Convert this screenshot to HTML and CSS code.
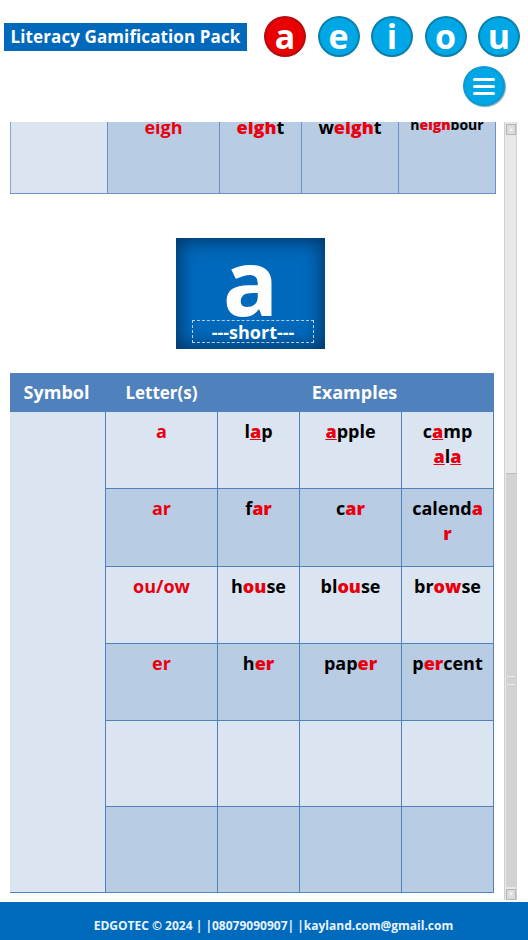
FILE: index.html
```html
<!DOCTYPE html>
<html lang="en">
<head>
  <meta charset="UTF-8">
  <title>Literacy Gamification Pack</title>
  <link rel="stylesheet" href="styles.css">
</head>
<body>

<header class="topbar">
  <div class="top-row">
    <h1 class="brand">Literacy Gamification Pack</h1>
    <nav class="vowels">
      <a class="vowel active">a</a>
      <a class="vowel">e</a>
      <a class="vowel">i</a>
      <a class="vowel">o</a>
      <a class="vowel">u</a>
    </nav>
  </div>
  <div class="menu-row">
    <button class="menu-btn" aria-label="Menu">
      <span></span><span></span><span></span>
    </button>
  </div>
</header>

<div class="viewport">
  <main class="scroll-area">
    <table class="chart chart-top">
      <colgroup>
        <col class="t1-a"><col class="t1-b"><col class="t1-c"><col class="t1-d"><col class="t1-e">
      </colgroup>
      <tr class="dark">
        <td class="symbol"></td>
        <td class="red">eigh</td>
        <td><b>eigh</b>t</td>
        <td>w<b>eigh</b>t</td>
        <td class="small">n<b>eigh</b>bour</td>
      </tr>
    </table>

    <div class="sound-card">
      <div class="sound-letter">a</div>
      <div class="sound-label">---short---</div>
    </div>

    <table class="chart chart-main">
      <colgroup>
        <col class="t2-a"><col class="t2-b"><col class="t2-c"><col class="t2-d"><col class="t2-e">
      </colgroup>
      <tr class="head">
        <th class="sym-head">Symbol</th>
        <th class="letters">Letter(s)</th>
        <th class="examples" colspan="3">Examples</th>
      </tr>
      <tr class="light row-a">
        <td class="symbol" rowspan="6"></td>
        <td class="red">a</td>
        <td>l<b><u>a</u></b>p</td>
        <td><b><u>a</u></b>pple</td>
        <td>c<b><u>a</u></b>mp <b><u>a</u></b>l<b><u>a</u></b></td>
      </tr>
      <tr class="dark row-wrap">
        <td class="red">ar</td>
        <td>f<b>ar</b></td>
        <td>c<b>ar</b></td>
        <td>calend<b>ar</b></td>
      </tr>
      <tr class="light row-b">
        <td class="red">ou/ow</td>
        <td>h<b>ou</b>se</td>
        <td>bl<b>ou</b>se</td>
        <td>br<b>ow</b>se</td>
      </tr>
      <tr class="dark row-b">
        <td class="red">er</td>
        <td>h<b>er</b></td>
        <td>pap<b>er</b></td>
        <td>p<b>er</b>cent</td>
      </tr>
      <tr class="light row-c">
        <td></td><td></td><td></td><td></td>
      </tr>
      <tr class="dark row-c">
        <td></td><td></td><td></td><td></td>
      </tr>
    </table>
  </main>

  <div class="scrollbar">
    <div class="sb-btn">&#9652;</div>
    <div class="sb-track">
      <div class="sb-thumb"><div class="sb-grip"></div></div>
    </div>
    <div class="sb-btn">&#9662;</div>
  </div>
</div>

<footer class="footer">EDGOTEC &copy; 2024 | |08079090907| |kayland.com@gmail.com</footer>

</body>
</html>
```

FILE: styles.css
```css
* {
  box-sizing: border-box;
}

body {
  margin: 0;
  height: 100vh;
  display: flex;
  flex-direction: column;
  overflow: hidden;
  background: white;
  font-family: "Open Sans", sans-serif;
  font-weight: 700;
  color: #000;
}

/* header */
.topbar {
  height: 122px;
  flex: none;
  background: white;
}

.top-row {
  display: flex;
  align-items: center;
  justify-content: space-between;
  padding: 16px 8px 0 4px;
}

.brand {
  margin: 0;
  width: 243px;
  height: 28px;
  background-color: #0069bb;
  color: white;
  font-size: 17px;
  letter-spacing: 0.1px;
  line-height: 28px;
  text-align: center;
  white-space: nowrap;
}

.vowels {
  display: flex;
  gap: 11.5px;
}

.vowel {
  width: 42px;
  height: 41px;
  border-radius: 50%;
  border: 2px solid #0b80ab;
  background-color: #00a7e6;
  color: white;
  font-size: 34px;
  line-height: 36px;
  text-align: center;
}

.vowel.active {
  background-color: #e90000;
  border-color: #b50a14;
}

.menu-row {
  display: flex;
  justify-content: flex-end;
  padding: 9px 23px 0 0;
}

.menu-btn {
  width: 42px;
  height: 40px;
  padding: 0;
  border-radius: 50%;
  border: 2px solid #0b9ad0;
  background-color: #00a7e6;
  box-shadow: 1px 1px 1px #7fa9b8;
  display: flex;
  flex-direction: column;
  align-items: center;
  justify-content: center;
  gap: 4px;
}

.menu-btn span {
  width: 22px;
  height: 3px;
  border-radius: 2px;
  background: white;
}

/* scrolling part */
.viewport {
  flex: 1;
  min-height: 0;
  display: flex;
  overflow: hidden;
}

.scroll-area {
  width: 504px;
  flex: none;
  overflow: hidden;
}

.chart {
  border-collapse: collapse;
  table-layout: fixed;
  font-size: 18px;
  line-height: 25px;
}

.chart td,
.chart th {
  border: 1px solid #4f81bd;
  vertical-align: top;
  text-align: center;
  padding: 7px 8px;
  word-wrap: break-word;
}

.chart b,
.chart .red {
  color: #e8000f;
}

.chart u {
  text-decoration-color: #e8000f;
}

.light td {
  background-color: #dbe5f1;
}

.dark td {
  background-color: #b8cce4;
}

.chart .symbol {
  background-color: #dbe5f1;
  border-left-color: #dbe5f1;
}

/* table above the picture */
.chart-top {
  width: 485px;
  margin: -15px 0 0 10px;
}

.chart-top tr {
  height: 86px;
}

.chart-top td {
  border-color: #6d91c4;
}

.chart-top .symbol {
  border-left-color: #8aa6cd;
}

.chart-top td.small {
  padding-left: 2px;
  padding-right: 2px;
  font-size: 14px;
  line-height: 20px;
}

.t1-a { width: 97px; }
.t1-b { width: 112px; }
.t1-c { width: 82px; }
.t1-d { width: 97px; }
.t1-e { width: 97px; }

/* letter picture */
.sound-card {
  width: 149px;
  height: 111px;
  margin: 44px 0 24px 176px;
  background-color: #0069bb;
  box-shadow: inset 0 0 18px 3px #003463;
  color: white;
}

.sound-letter {
  height: 82px;
  padding-top: 4px;
  font-size: 92px;
  line-height: 78px;
  text-align: center;
}

.sound-label {
  width: 122px;
  height: 23px;
  margin-left: 16px;
  border: 1px dashed #b9cfe4;
  font-size: 18px;
  line-height: 22px;
  text-align: center;
  white-space: nowrap;
}

/* main table */
.chart-main {
  width: 483px;
  margin-left: 10px;
}

.t2-a { width: 95px; }
.t2-b { width: 112px; }
.t2-c { width: 82px; }
.t2-d { width: 102px; }
.t2-e { width: 92px; }

.chart .head th {
  height: 38px;
  padding: 6px 0;
  background-color: #4f81bd;
  color: white;
  font-size: 18px;
}

.chart .head .sym-head {
  padding-right: 3px;
}

.chart .head .examples {
  padding-right: 2px;
}

.chart .head .letters {
  font-size: 17px;
}

.row-a { height: 77px; }
.row-wrap { height: 78px; }
.row-b { height: 77px; }
.row-c { height: 86px; }

/* fake scrollbar */
.scrollbar {
  width: 13px;
  height: 778px;
  display: flex;
  flex-direction: column;
  background-color: #e8e8e8;
  border-left: 1px solid #cfcfcf;
  border-right: 1px solid #cfcfcf;
}

.sb-btn {
  height: 11px;
  margin: 2px 0 0 1px;
  flex: none;
  background-color: #dcdcdc;
  border: 1px solid #b5b5b5;
  color: #f4f4f4;
  font-size: 7px;
  font-family: "DejaVu Sans", sans-serif;
  line-height: 9px;
  text-align: center;
}

.sb-track {
  flex: 1;
  display: flex;
  flex-direction: column;
  justify-content: flex-end;
}

.sb-thumb {
  height: 414px;
  margin: 0 0 0 1px;
  display: flex;
  align-items: center;
  background-color: #d2d2d2;
  border-top: 1px solid #bdbdbd;
  padding: 0 1px;
}

.sb-grip {
  width: 100%;
  height: 9px;
  border-top: 1px solid #ececec;
  border-bottom: 1px solid #ececec;
}

/* footer */
.footer {
  height: 38px;
  flex: none;
  background-color: #006bbd;
  color: #e8f4ff;
  font-size: 12px;
  line-height: 47px;
  text-align: center;
  padding-left: 19px;
}
```
